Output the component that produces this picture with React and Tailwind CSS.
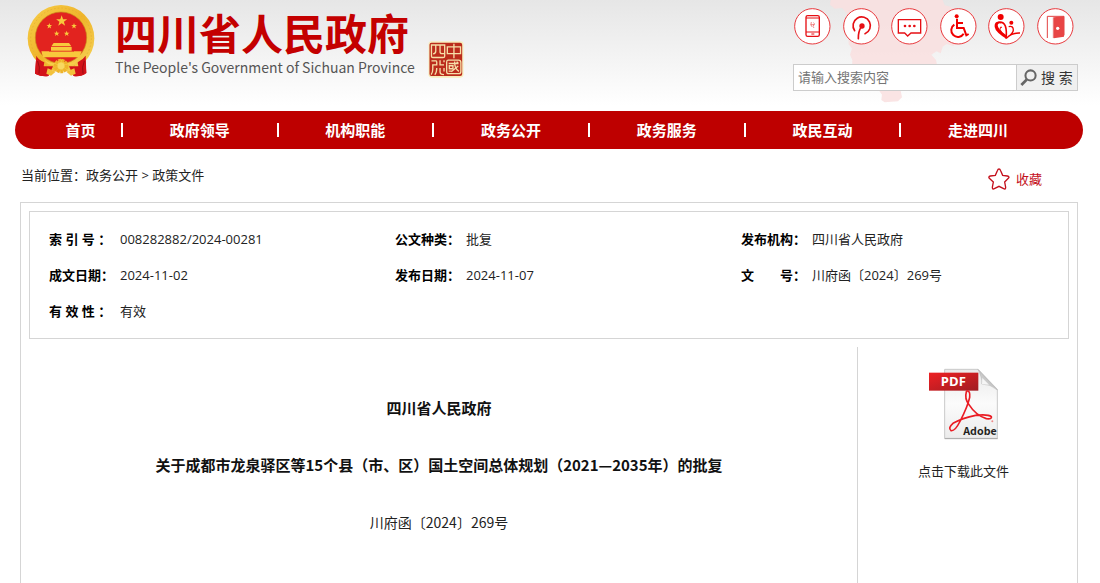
import { useState } from 'react';

const navItems = ['政府领导', '机构职能', '政务公开', '政务服务', '政民互动', '走进四川'];

// row by row, three per row
const info = [
  { label: '索 引 号 ：', value: '008282882/2024-00281' },
  { label: '公文种类：', value: '批复' },
  { label: '发布机构：', value: '四川省人民政府' },
  { label: '成文日期：', value: '2024-11-02' },
  { label: '发布日期：', value: '2024-11-07' },
  { label: '文　　号：', value: '川府函〔2024〕269号' },
  { label: '有 效 性 ：', value: '有效' },
];

function Emblem() {
  const star = 'M0,-10 L2.4,-3.2 9.5,-3.1 3.8,1.2 5.9,8.1 0,4 -5.9,8.1 -3.8,1.2 -9.5,-3.1 -2.4,-3.2Z';
  return (
    <svg viewBox="0 0 204 216" className="w-[68px] h-[72px] shrink-0" aria-hidden="true">
      <defs>
        <linearGradient id="gold" x1="0" y1="0" x2="1" y2="1">
          <stop offset="0" stopColor="#f7cf4a" />
          <stop offset="0.5" stopColor="#efb42a" />
          <stop offset="1" stopColor="#f6d65c" />
        </linearGradient>
      </defs>
      <path d="M28 152 L24 206 Q44 216 64 213 L80 188 H124 L140 213 Q162 216 178 204 L174 152Z" fill="#d3131a" />
      <circle cx="102" cy="100" r="100" fill="url(#gold)" />
      <circle cx="102" cy="100" r="91" fill="none" stroke="#e3aa30" strokeWidth="2" strokeDasharray="5 6" />
      <circle cx="102" cy="98" r="77" fill="#e2231f" stroke="#c98a1b" strokeWidth="2" />
      <g fill="#f8c93c">
        <path d={star} transform="translate(104 48) scale(1.75)" />
        <path d={star} transform="translate(67 63) scale(.9)" />
        <path d={star} transform="translate(141 63) scale(.9)" />
        <path d={star} transform="translate(89 86) scale(.9)" />
        <path d={star} transform="translate(119 86) scale(.9)" />
        <path d="M80 114 H126 L133 124 H73Z M72 126 H134 V137 H72Z M68 138 H139 V145 H68Z M43 139 H164 L157 157 H48Z" />
        <path d="M66 138 h75 v3 h-75z" fill="#e2231f" opacity=".6" />
      </g>
      <path d="M28 152 Q34 164 52 172 L50 184 H78 L64 213 Q44 216 24 206Z M176 152 Q168 164 152 172 L154 184 H126 L140 213 Q162 216 178 204Z" fill="#d3131a" />
      <path d="M52 164 Q78 186 102 162 Q126 186 152 164 Q140 188 102 178 Q64 188 52 164Z" fill="#f6cf4a" />
      <circle cx="102" cy="183" r="17" fill="none" stroke="#efb42a" strokeWidth="10" strokeDasharray="8 2" />
      <circle cx="102" cy="183" r="10" fill="#f8d861" />
      <path d="M62 190 L86 200 L72 212 L58 206Z M142 190 L118 200 L132 212 L146 206Z" fill="#f3c23c" />
      <path d="M32 168 q8 18 4 38 M172 168 q-8 18 -4 38" stroke="#9b0c12" strokeWidth="3" fill="none" />
    </svg>
  );
}

function Seal() {
  return (
    <svg viewBox="0 0 108 112" className="w-9 h-[37px] shrink-0" aria-hidden="true">
      <rect x="1" y="1" width="106" height="110" rx="10" fill="#f7edbd" />
      <rect x="4" y="5" width="99" height="101" rx="6" fill="#bb2c1c" />
      <g fill="none" stroke="#f6dfa8" strokeWidth="4">
        <path d="M10 12 H50 V46 Q50 50 45 50 H14 Q10 50 10 46Z M23 13 V30 Q23 38 15 39 M36 13 V33 Q36 38 42 38 H48" />
        <path d="M58 18 H98 V38 H58Z M78 8 V52" />
        <path d="M10 60 H24 Q26 60 26 64 V72 H14 V84 Q14 96 9 102 M26 82 Q26 96 20 102 M36 58 V72 H48 M36 82 V94 Q36 102 48 102 M48 58 V64 M48 82 V92" />
        <path d="M60 58 H92 Q99 58 99 65 V92 Q99 99 92 99 H62 Q56 99 56 92 V64 Q56 58 60 58Z" />
        <path d="M62 68 H92 M80 62 Q80 84 93 92 M91 76 L70 93 M64 75 H75 V84 H64Z M62 91 H74 M86 63 l5 3" />
      </g>
    </svg>
  );
}

function MapShape() {
  return (
    <svg viewBox="0 0 960 336" className="absolute right-0 top-0 w-80 h-28" aria-hidden="true">
      <path
        fill="#f9dfdf"
        fillOpacity="0.85"
        d="M152 0 L150 14 L164 26 L186 24 L200 40 L204 90 L206 132 L216 146 L210 164 L217 180 L216 200 L260 240 L296 270 L306 284 L304 300 L314 307 L354 304 L366 292 L362 272 L420 230 L472 200 L468 180 L454 164 L470 154 L482 160 L488 140 L500 132 L520 138 L548 118 L570 90 L572 70 L584 52 L572 36 L550 28 L530 32 L512 20 L494 16 L488 0Z"
      />
    </svg>
  );
}

function PhoneIcon() {
  return (
    <>
      <rect x="36" y="23" width="40" height="62" rx="5" fill="none" stroke="#e60f14" strokeWidth="4" />
      <path d="M36 30 H76 M36 72 H76" stroke="#e60f14" strokeWidth="3" />
      <path d="M52 78 h9" stroke="#e60f14" strokeWidth="3" />
      <path d="M52 42 q-3 8 1 14 m5 -12 q6 2 1 7 q-4 5 1 9 M50 50 h12" stroke="#ea5050" strokeWidth="2" fill="none" />
    </>
  );
}

function PodIcon() {
  return (
    <>
      <path d="M35 68 A26 26 0 1 1 66 77" fill="none" stroke="#e60f14" strokeWidth="5" strokeLinecap="round" />
      <circle cx="57" cy="54" r="8" fill="#e60f14" />
      <path d="M55 56 Q45 72 46 92" fill="none" stroke="#e60f14" strokeWidth="5" strokeLinecap="round" />
    </>
  );
}

function ChatIcon() {
  return (
    <>
      <path d="M22 35 H89 V75 H60 L50 84 L41 75 H22Z" fill="none" stroke="#e60f14" strokeWidth="4" />
      <circle cx="42" cy="54" r="4" fill="#e60f14" />
      <circle cx="56" cy="54" r="4" fill="#e60f14" />
      <circle cx="70" cy="54" r="4" fill="#e60f14" />
    </>
  );
}

function WheelchairIcon() {
  return (
    <>
      <circle cx="50" cy="25" r="6" fill="#f00000" />
      <path d="M51 32 V60 H71 L79 82 L86 78 M51 45 H69" fill="none" stroke="#f00000" strokeWidth="6" />
      <path d="M43 50 A20 20 0 1 0 71 77" fill="none" stroke="#f00000" strokeWidth="6" />
    </>
  );
}

function FamilyIcon() {
  return (
    <>
      <circle cx="38" cy="27" r="9" fill="#f00000" />
      <path d="M22 45 Q30 36 40 47 Q31 43 29 51 Q29 64 55 82 L56 93 Q22 72 20 57 Q19 49 22 45Z" fill="#f00000" />
      <path d="M30 43 Q46 40 52 54 Q57 68 54 92" fill="none" stroke="#f00000" strokeWidth="5" />
      <path d="M42 58 Q36 54 36 64 Q40 76 52 84" fill="none" stroke="#f00000" strokeWidth="3" />
      <circle cx="70" cy="44" r="6" fill="#f00000" />
      <path d="M62 56 Q76 52 76 66 Q76 76 56 90 Q72 74 96 75" fill="none" stroke="#f00000" strokeWidth="4" />
    </>
  );
}

function DoorIcon() {
  return (
    <>
      <path d="M31 90 V25 H81 V82" fill="none" stroke="#e24343" strokeWidth="3" />
      <path d="M50 28 L81 25 V86 L50 91Z" fill="#e84545" />
      <path d="M49 28 V90" stroke="#e24343" strokeWidth="2" />
      <circle cx="62" cy="61" r="5" fill="#fff" />
    </>
  );
}

const quickLinks = [
  { name: '手机版', Icon: PhoneIcon },
  { name: '智能问答', Icon: PodIcon },
  { name: '留言', Icon: ChatIcon },
  { name: '无障碍', Icon: WheelchairIcon },
  { name: '长者版', Icon: FamilyIcon },
  { name: '登录', Icon: DoorIcon },
];

function PdfIcon() {
  return (
    <svg viewBox="0 0 210 216" className="w-[70px] h-[72px]" aria-hidden="true">
      <defs>
        <linearGradient id="page" x1="0" y1="0" x2="0" y2="1">
          <stop offset="0" stopColor="#e9e9e9" />
          <stop offset="0.5" stopColor="#fbfbfb" />
          <stop offset="1" stopColor="#ececec" />
        </linearGradient>
        <linearGradient id="band" x1="0" y1="0" x2="1" y2="1">
          <stop offset="0" stopColor="#ee2023" />
          <stop offset="1" stopColor="#a01c22" />
        </linearGradient>
        <linearGradient id="fold" x1="0" y1="1" x2="1" y2="0">
          <stop offset="0" stopColor="#f4f4f4" />
          <stop offset="0.5" stopColor="#c4c4c4" />
          <stop offset="1" stopColor="#8f8f8f" />
        </linearGradient>
      </defs>
      <path d="M47 4 H147 L205 64 V211 H47Z" fill="url(#page)" stroke="#c9c9c9" strokeWidth="3" />
      <path d="M47 212 H206" stroke="#a9a9a9" strokeWidth="3" />
      <path d="M147 4 Q160 30 158 48 Q184 48 205 66Z" fill="url(#fold)" stroke="#a5a5a5" strokeWidth="1" />
      <path d="M159 48 L160 30 L180 50Z" fill="#f5f5f5" />
      <rect x="0" y="14" width="148" height="54" fill="url(#band)" />
      <path
        d="M112 72 Q106 92 120 110 Q140 142 172 152 Q190 154 187 146 Q178 138 140 142 Q100 150 72 166 Q56 180 66 188 Q78 190 92 162 Q116 116 122 88 Q124 70 116 69 Q112 68 112 74"
        fill="none"
        stroke="#ea1c24"
        strokeWidth="5"
      />
      <circle cx="190" cy="160" r="3" fill="#e88" />
      <text x="73" y="54" textAnchor="middle" fill="#fff" fontSize="39" fontWeight="700" fontFamily="'Open Sans', sans-serif">PDF</text>
      <text x="153" y="200" textAnchor="middle" fill="#231f20" fontSize="32" fontWeight="700" fontFamily="'Noto Sans CJK SC', sans-serif">Adobe</text>
    </svg>
  );
}

export default function App() {
  const [query, setQuery] = useState('');

  return (
    <div className="min-h-screen flex flex-col bg-white text-[#222] text-[13px] font-['Open_Sans','Noto_Sans_CJK_SC',sans-serif]">
      <header className="relative bg-linear-to-b from-[#e6e6e6] to-white to-95% flex justify-between pl-[27px] pr-[22px] pt-[5px] pb-5">
        <MapShape />
        <div className="relative flex">
          <Emblem />
          <div className="ml-5 w-[299px]">
            <h1 className="mt-0.5 text-[42px] leading-[50px] font-bold text-[#c40000] font-['Noto_Sans_CJK_SC',sans-serif]">四川省人民政府</h1>
            <p className="text-sm leading-5 text-[#555] whitespace-nowrap font-['Noto_Sans_CJK_SC',sans-serif]">The People's Government of Sichuan Province</p>
          </div>
          <div className="ml-3.5 mt-9">
            <Seal />
          </div>
        </div>

        <div className="relative w-[285px] pt-[3px]">
          <div className="flex justify-between pl-px pr-1">
            {quickLinks.map(({ name, Icon }) => (
              <a key={name} href="#" aria-label={name} className="block">
                <svg viewBox="0 0 111 111" className="size-[37px]">
                  <circle cx="55" cy="55" r="53" fill="#fff" stroke="#e8383c" strokeWidth="3" />
                  <Icon />
                </svg>
              </a>
            ))}
          </div>
          <form className="mt-[19px] flex h-[27px] border border-[#ccc] bg-white" onSubmit={(e) => e.preventDefault()}>
            <input
              type="text"
              aria-label="搜索内容"
              placeholder="请输入搜索内容"
              value={query}
              onChange={(e) => setQuery(e.target.value)}
              className="flex-1 min-w-0 px-1 text-[13px] outline-none placeholder:text-[#757575]"
            />
            <button type="submit" className="flex items-center gap-1 w-[61px] pl-[3px] border-l border-[#ccc] bg-[#f0f0f0] text-sm text-[#333] whitespace-nowrap">
              <svg viewBox="0 0 50 50" className="size-[17px] shrink-0" aria-hidden="true">
                <circle cx="31" cy="19" r="15" fill="none" stroke="#666" strokeWidth="6" />
                <path d="M20 31 L4 47" stroke="#666" strokeWidth="8" />
              </svg>
              搜 索
            </button>
          </form>
        </div>
      </header>

      <nav className="mx-[15px] mr-[17px] h-[38px] pl-6 pr-[27px] flex items-center rounded-full bg-[#be0000] text-white text-[15px] font-bold text-center">
        <a href="#" className="flex-[83]">首页</a>
        {navItems.map((item) => (
          <a key={item} href="#" className="relative flex-[156] before:absolute before:-left-px before:top-1/2 before:-translate-y-1/2 before:w-0.5 before:h-3.5 before:bg-white">
            {item}
          </a>
        ))}
      </nav>

      <div className="pl-[21px] pr-[58px] pt-[15px] pb-3 flex items-start justify-between leading-[22px]">
        <div className="whitespace-pre">
          当前位置：<a href="#">政务公开</a> &gt; <a href="#">政策文件</a>
        </div>
        <button type="button" className="mt-1 flex items-center gap-1.5 text-[#c4101c]">
          <svg viewBox="0 0 66 66" className="size-[22px]" aria-hidden="true">
            <path
              d="M33 3 Q36 3 38 8 L44 22 L58 24 Q66 26 61 31 L50 42 L53 58 Q53 65 47 62 L33 55 L19 62 Q13 65 13 58 L16 42 L4 31 Q0 26 7 24 L22 22 L28 8 Q30 3 33 3Z"
              fill="none"
              stroke="#c4101c"
              strokeWidth="4"
            />
          </svg>
          收藏
        </button>
      </div>

      <main className="ml-5 mr-[22px] flex-1 flex flex-col border border-b-0 border-[#d5d5d5]">
        <dl className="mx-2 mt-2 py-[9px] grid grid-cols-3 border border-[#d5d5d5] leading-9">
          {info.map(({ label, value }) => (
            <div key={label} className="flex pl-[19px] whitespace-nowrap">
              <dt className="w-[71px] font-bold text-black">{label}</dt>
              <dd>{value}</dd>
            </div>
          ))}
        </dl>

        <div className="mt-2 mr-2 flex-1 flex">
          <article className="flex-1 pt-[47px] text-center text-[15px] leading-7 font-['Noto_Sans_CJK_SC',sans-serif]">
            <h2 className="font-bold text-[#111]">四川省人民政府</h2>
            <h2 className="mt-[29px] font-bold text-[#111]">关于成都市龙泉驿区等15个县（市、区）国土空间总体规划（2021—2035年）的批复</h2>
            <p className="mt-[29px] text-[14px]">川府函〔2024〕269号</p>
          </article>
          <aside className="w-[212px] border-l border-[#d5d5d5] pt-[21px]">
            <a href="#" className="flex flex-col items-center">
              <PdfIcon />
              <span className="mt-[22px]">点击下载此文件</span>
            </a>
          </aside>
        </div>
      </main>
    </div>
  );
}
